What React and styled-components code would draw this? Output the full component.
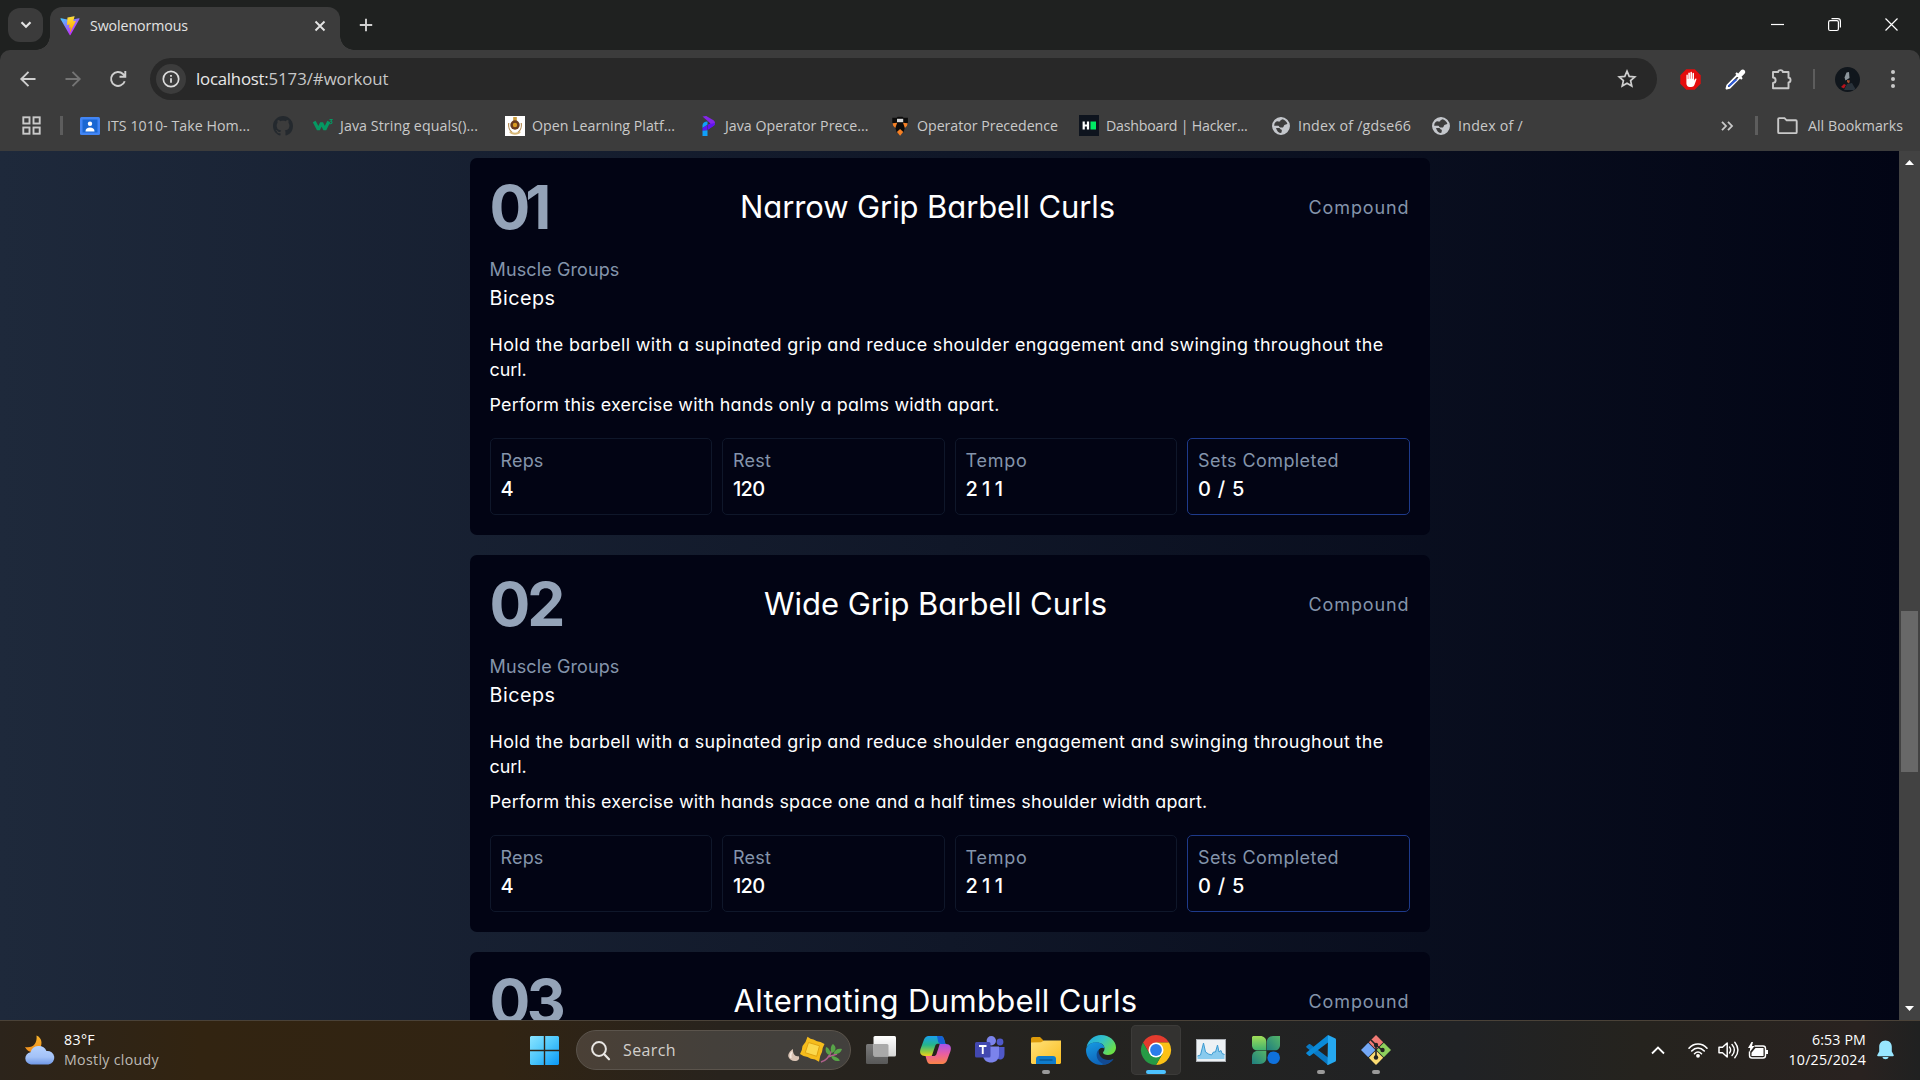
import React, { useLayoutEffect, useRef, useState } from "react";
import styled, { createGlobalStyle, css } from "styled-components";

const UI = '"Open Sans", "Noto Sans", sans-serif';
const BODY = 'Inter, "Open Sans", sans-serif';

const Global = createGlobalStyle`
  * { box-sizing: border-box; }
  html, body { margin: 0; padding: 0; background: #1f2120; overflow: hidden; }
  svg { display: block; flex: none; overflow: visible; }
  p, h2, h3 { margin: 0; font-weight: inherit; font-size: inherit; }
`;

/* Single-line label whose tracking is adjusted so it spans the given width */
const Label = styled.span`
  display: inline-block;
  white-space: pre;
`;
function Fit({ w, children }) {
  const ref = useRef(null);
  const [spacing, setSpacing] = useState(0);
  useLayoutEffect(() => {
    const natural = ref.current.getBoundingClientRect().width;
    setSpacing((w - natural) / children.length);
  }, [w, children]);
  return <Label ref={ref} style={{ letterSpacing: spacing }}>{children}</Label>;
}

const Screen = styled.div`
  width: 1920px;
  height: 1080px;
  display: flex;
  flex-direction: column;
  overflow: hidden;
  font-family: ${UI};
`;

/* ---------- browser chrome ---------- */
const TabStrip = styled.div`
  height: 50px;
  flex: none;
  display: flex;
  background: #1f2120;
  padding-left: 8px;
`;
const TabSearch = styled.div`
  width: 35px;
  height: 34px;
  margin: 8px 7px 0 0;
  border-radius: 12px;
  background: #3b3b3b;
  display: grid;
  place-items: center;
`;
const Tab = styled.div`
  position: relative;
  width: 290px;
  height: 43px;
  margin-top: 7px;
  padding: 0 14px 6px 10px;
  display: flex;
  align-items: center;
  background: #3c3c3c;
  border-radius: 12px 12px 0 0;
  color: #e3e3e3;
  font-size: 14.2px;
  &::before, &::after {
    content: "";
    position: absolute;
    bottom: 0;
    width: 14px;
    height: 14px;
  }
  &::before { left: -14px; background: radial-gradient(circle at 0 0, transparent 13.5px, #3c3c3c 14px); }
  &::after { right: -14px; background: radial-gradient(circle at 100% 0, transparent 13.5px, #3c3c3c 14px); }
`;
const TabTitle = styled.span`
  flex: 1;
  padding-left: 10px;
`;
const NewTab = styled.div`
  width: 51px;
  height: 50px;
  display: grid;
  place-items: center;
`;
const WindowControls = styled.div`
  margin-left: auto;
  display: grid;
  grid-template-columns: repeat(3, 57px);
  height: 49px;
  place-items: center;
`;

const Toolbar = styled.div`
  height: 58px;
  flex: none;
  display: flex;
  align-items: center;
  background: #3c3c3c;
  border-radius: 10px 10px 0 0;
`;
const NavButton = styled.div`
  width: 45px;
  height: 45px;
  display: grid;
  place-items: center;
  ${(p) => p.$first && css`margin-left: 5px;`}
`;
const AddressBar = styled.div`
  width: 1507px;
  height: 42px;
  margin-left: 10px;
  padding: 0 20px 0 6px;
  display: flex;
  align-items: center;
  border-radius: 21px;
  background: #282828;
  color: #c7c7c7;
  font-size: 16.8px;
`;
const SiteInfo = styled.div`
  width: 30px;
  height: 30px;
  border-radius: 50%;
  background: #3c3c3c;
  display: grid;
  place-items: center;
`;
const Url = styled.div`
  flex: 1;
  padding: 0 0 1px 10px;
  b { font-weight: 400; color: #e8e8e8; }
`;
const ExtCell = styled.div`
  width: ${(p) => p.$w}px;
  height: 42px;
  display: grid;
  place-items: center;
  ${(p) => p.$first && css`margin-left: 10px;`}
`;
const Divider = styled.i`
  width: ${(p) => p.$w || 2}px;
  height: 20px;
  background: #5d5d5d;
`;
const Avatar = styled.div`
  width: 25px;
  height: 25px;
  border-radius: 50%;
  overflow: hidden;
  background: #10161c;
`;

const BookmarkBar = styled.div`
  height: 43px;
  flex: none;
  padding: 0 17px 8px 22px;
  display: flex;
  align-items: center;
  background: #3c3c3c;
  color: #c9c9c9;
  font-size: 14.2px;
`;
const BarRule = styled.i`
  width: 3px;
  height: 19px;
  background: #5d5d5d;
  margin: ${(p) => p.$m};
`;
const Bookmark = styled.div`
  width: ${(p) => p.$w}px;
  display: flex;
  align-items: center;
  gap: 7px;
`;
const AllBookmarks = styled.div`
  display: flex;
  align-items: center;
  gap: 10px;
`;
const More = styled.div`margin-left: auto;`;

/* ---------- page ---------- */
const Viewport = styled.div`
  height: 869px;
  flex: none;
  display: flex;
  overflow: hidden;
`;
const Page = styled.main`
  flex: 1;
  padding-top: 7px;
  display: flex;
  flex-direction: column;
  align-items: center;
  gap: 20px;
  background: linear-gradient(to right, #1e293b, #020515);
  font-family: ${BODY};
  font-feature-settings: "cv11";
  color: #fff;
`;
const Card = styled.section`
  width: 960px;
  height: 377px;
  flex: none;
  padding: 20px;
  display: flex;
  flex-direction: column;
  gap: 20px;
  border-radius: 7px;
  background: #020414;
`;
const CardHeader = styled.div`
  display: flex;
  align-items: center;
  justify-content: space-between;
  height: 60px;
  padding-bottom: 2px;
`;
const Index = styled.h2`
  font-size: 60.5px;
  line-height: 58px;
  font-weight: 700;
  color: #94a3b8;
`;
const Title = styled.h2`
  font-size: 31px;
  line-height: 40px;
`;
const Muted = styled.p`
  font-size: 18px;
  line-height: 23px;
  padding-bottom: 2px;
  color: #8494ab;
`;
const Type = styled(Muted)`padding-bottom: 0;`;
const Muscle = styled.p`
  height: 30px;
  font-size: 19.8px;
  line-height: 31px;
`;
const Notes = styled.div`
  display: flex;
  flex-direction: column;
  gap: 10px;
  font-size: 17.9px;
  line-height: 23px;
`;
const Line = styled.div`height: 25px;`;
const Stats = styled.div`
  display: grid;
  grid-template-columns: repeat(4, 1fr);
  gap: 10px;
`;
const Stat = styled.div`
  height: 77px;
  padding: 10px;
  border: 1px solid ${(p) => (p.$active ? "#1e3a8a" : "#0f172a")};
  border-radius: 5px;
`;
const Value = styled.p`
  font-size: 20px;
  line-height: 30px;
  font-weight: 550;
`;

const Scrollbar = styled.div`
  width: 21px;
  background: #424242;
  display: flex;
  flex-direction: column;
  align-items: center;
  padding: 9px 0;
`;
const Thumb = styled.div`
  width: 17px;
  height: 161px;
  margin: 446px 0 auto;
  background: #686868;
`;

/* ---------- taskbar ---------- */
const Taskbar = styled.footer`
  height: 60px;
  flex: none;
  display: flex;
  align-items: center;
  padding-bottom: 1px;
  border-top: 1px solid #4a4238;
  background: linear-gradient(to right, #2c241b 0, #322411 200px, #312413 500px, #28231d 720px, #242320 1100px, #202225 1460px, #25231e 1640px, #292220 1860px, #202121 1920px);
  color: #fff;
`;
const Weather = styled.div`
  width: 517px;
  padding-left: 24px;
  display: flex;
  align-items: center;
  gap: 8px;
  font-size: 14.2px;
  line-height: 20px;
`;
const Sub = styled.div`color: #bdb9b4;`;
const TaskButton = styled.div`
  position: relative;
  width: 50px;
  height: 50px;
  margin: 0 2.5px;
  display: grid;
  place-items: center;
  border-radius: 5px;
  ${(p) => p.$active && css`background: #333230; box-shadow: inset 0 0 0 1px #3c3b39;`}
`;
const Running = styled.i`
  position: absolute;
  left: 50%;
  bottom: 1px;
  width: ${(p) => (p.$active ? 20 : 8)}px;
  height: 4px;
  transform: translateX(-50%);
  border-radius: 2px;
  background: ${(p) => (p.$active ? "#4cc2ff" : "#9a9a9a")};
`;
const SearchBox = styled.div`
  width: 275px;
  height: 40px;
  margin: 0 2px 0 4px;
  padding: 0 7px 0 14px;
  display: flex;
  align-items: center;
  gap: 13px;
  border: 1px solid #5b544c;
  border-radius: 20px;
  background: linear-gradient(to right, #4a4036, #44403b 50%, #42403d);
  color: #d2cfcc;
  font-size: 16px;
`;
const Doodle = styled.div`margin-left: auto;`;
const Tray = styled.div`
  margin-left: auto;
  display: flex;
  align-items: center;
`;
const TrayCell = styled.div`
  width: ${(p) => p.$w}px;
  display: grid;
  place-items: center;
  ${(p) => p.$end && css`padding-right: 15px;`}
`;
const Clock = styled.div`
  width: 93px;
  text-align: right;
  font-size: 14.2px;
  line-height: 20px;
`;

/* ---------- icons ---------- */
const S = ({ w = 20, h = w, vb, children, ...r }) => (
  <svg width={w} height={h} viewBox={vb || `0 0 ${w} ${h}`} fill="none" {...r}>{children}</svg>
);

const ViteIcon = () => (
  <S w={20} vb="0 0 410 404">
    <defs>
      <linearGradient id="vA" x1="6" y1="33" x2="235" y2="344" gradientUnits="userSpaceOnUse"><stop stopColor="#41D1FF" /><stop offset="1" stopColor="#BD34FE" /></linearGradient>
      <linearGradient id="vB" x1="194" y1="8" x2="236" y2="292" gradientUnits="userSpaceOnUse"><stop stopColor="#FFEA83" /><stop offset=".08" stopColor="#FFDD35" /><stop offset="1" stopColor="#FFA800" /></linearGradient>
    </defs>
    <path d="M399.6 59.5 215.6 388.500c-3.800 6.800-13.500 6.800-17.300.100L10.600 59.500c-4.200-7.300 2.100-16.200 10.400-14.700l184.200 32.900c1.200.2 2.400.2 3.500 0l180.400-32.900c8.300-1.500 14.600 7.300 10.500 14.700z" fill="url(#vA)" />
    <path d="M293 1.600 156.800 28.300c-2.200.4-3.900 2.300-4 4.600l-8.400 141.500c-.2 3.300 2.900 5.900 6.100 5.200l37.900-8.800c3.600-.8 6.800 2.300 6 5.900l-11.200 55.200c-.8 3.700 2.700 6.900 6.300 5.800l23.400-7.100c3.600-1.100 7.100 2.100 6.400 5.800l-17.900 86.700c-1.100 5.400 6.100 8.400 9.100 3.700l2-3.100 111-221.500c1.900-3.700-1.400-8-5.400-7.200l-39 7.500c-3.700.7-6.800-2.700-5.800-6.300l25.500-88.300c1-3.600-2.100-7-5.800-6.300z" fill="url(#vB)" />
  </S>
);
const InfoIcon = () => (
  <S w={18}><circle cx="9" cy="9" r="7.7" stroke="#dcdcdc" strokeWidth="1.700" /><path d="M9 8.200v4.600M9 5v1.800" stroke="#dcdcdc" strokeWidth="1.800" /></S>
);
const ArrowIcon = ({ right, color }) => (
  <S w={16} transform={right ? "scale(-1 1)" : undefined}><path d="M8.500.800 1.300 8l7.200 7.200M1.500 8H15.500" stroke={color} strokeWidth="1.900" /></S>
);
const ReloadIcon = () => (
  <S w={18}><path d="M15.700 11.200A7 7 0 1 1 14 4l2 2.200M16.300 1v5.700H10.500" stroke="#cfcfcf" strokeWidth="1.900" /></S>
);
const AdBlockIcon = () => (
  <S w={21}>
    <path d="M6.200.3h8.600l5.900 6v8.500l-6 5.900H6.300l-6-5.900V6.300z" fill="#e40d0d" />
    <path d="M6.400 12.500V6.200c0-1 1.400-1 1.400 0V10h.5V4.300c0-1.100 1.600-1.100 1.600 0V9.800h.5V3.500c0-1.100 1.600-1.100 1.600 0v6.300h.5V4.600c0-1 1.500-1 1.500 0v7.200l.9-1.700c.6-1 1.900-.6 1.500.5l-1.900 5.200c-.6 1.500-1.700 2.200-3.300 2.200h-1.500c-2 0-3.300-1.700-3.300-3.600z" fill="#fff" />
  </S>
);
const DropperIcon = () => (
  <S w={21}>
    <path d="M12.300 6.200 2.300 16.400 1.500 19.500l3.100-.7L14.700 8.700z" stroke="#fff" strokeWidth="1.900" strokeLinejoin="round" fill="#3c3c3c" />
    <path d="M9.500 10.600h3.200L4.400 18l-1.600-1.300z" fill="#2b59d8" />
    <path d="m10.300 4.700 1.400-1.500 1.500 1.200 3-3.300c2-2 5.400 1.100 3.500 3.400l-3.200 3.200 1.200 1.500-1.500 1.500z" fill="#fff" />
  </S>
);
const PuzzleIcon = () => (
  <S w={21} h={21}><path d="M2 3h5.200C7.200.500 11.800.500 11.800 3H17.500v5.700c2.700 0 2.700 4.800 0 4.800V19.200H2v-5.300c3.500-.2 3.500-5.200 0-5.400z" stroke="#c9c9c9" strokeWidth="1.900" strokeLinejoin="round" /></S>
);
const HeroAvatar = () => (
  <S w={25}><path d="M11.500 5.500 14 5l.5 6-4 2.500-1-3z" fill="#8c959c" /><path d="m12 13 3 .5-1 3-2-1.500z" fill="#a5502f" /><path d="m6 20 3-3 2 1-2 3.500z" fill="#b8131c" /><path d="m12 17 5-1 4 7H9z" fill="#2a333b" /></S>
);
const AppsIcon = () => (
  <S w={19}>{[[1, 1], [11.200, 1], [1, 11.200], [11.200, 11.200]].map(([x, y]) => <rect key={x + "-" + y} x={x + .3} y={y + .3} width="6.200" height="6.200" stroke="#c9c9c9" strokeWidth="1.900" />)}</S>
);
const ClassroomIcon = () => (
  <S w={20} h={18}><rect width="20" height="18" rx="1.500" fill="#4285f4" /><rect x="2.500" y="2.500" width="15" height="13" fill="#1967d2" /><circle cx="10" cy="6.700" r="2.200" fill="#fff" /><path d="M5.500 14.500c0-3 2-4 4.500-4s4.500 1 4.500 4z" fill="#fff" /></S>
);
const GithubIcon = () => (
  <S w={20} vb="0 0 16 16"><path fill="#24292e" d="M8 0C3.580 0 0 3.580 0 8c0 3.540 2.290 6.530 5.470 7.590.4.070.55-.17.55-.38 0-.19-.01-.82-.01-1.490-2.010.37-2.530-.49-2.690-.94-.09-.23-.48-.94-.82-1.130-.28-.15-.68-.52-.01-.53.63-.01 1.080.58 1.230.82.72 1.210 1.870.87 2.330.66.070-.52.280-.87.510-1.070-1.780-.2-3.640-.89-3.640-3.950 0-.87.310-1.590.820-2.150-.08-.2-.36-1.020.08-2.120 0 0 .67-.21 2.200.82.640-.18 1.320-.27 2-.27s1.360.09 2 .27c1.530-1.040 2.200-.82 2.200-.82.44 1.100.16 1.920.08 2.120.51.56.82 1.270.82 2.150 0 3.070-1.870 3.750-3.650 3.950.29.25.54.73.54 1.480 0 1.070-.01 1.930-.01 2.200 0 .21.15.46.55.38A8.010 8.010 0 0 0 16 8c0-4.420-3.580-8-8-8z" /></S>
);
const W3Icon = () => (
  <S w={20} h={16}>
    <path d="m1.200 3.500 4.200 8 3.200-6.500 3.200 6.500 4-8" stroke="#059862" strokeWidth="3.200" strokeLinejoin="bevel" />
    <path d="M16.500 1.500h2.500l-1.300 1.700c1.900.2 1.700 2.600-.2 2.600-.6 0-1-.2-1.300-.5" stroke="#059862" strokeWidth="1.100" />
  </S>
);
const CrestIcon = () => (
  <S w={20}><rect width="20" height="20" fill="#fff" /><rect x="8.200" y="1" width="3.600" height="4" fill="#c99a3c" /><circle cx="10" cy="9" r="4.700" fill="#6b3a1f" /><circle cx="10" cy="9" r="2.200" fill="#d99a20" /><path d="M3.800 7c-.6 3.500.6 7.500 3.200 9M16.200 7c.6 3.500-.6 7.500-3.200 9" stroke="#b28a50" strokeWidth="1.200" /><path d="M5 15.500c2 3 8 3 10 0" stroke="#d8b878" strokeWidth="2" /></S>
);
const ProgramizIcon = () => (
  <S w={20}>
    <path d="M4.500.6 8.200 0l7.300 4.300c1.700 1.100 1.900 3.300.9 4.700L10.200 13.200V9.300l2.300-1.800z" fill="#8426ea" />
    <path d="M10 8.500 17 7c.1 1.400-.5 2.300-1.500 3L10 13.700z" fill="#6013f0" />
    <path d="M4.500 9.500c0-2.500 2-4 5-4v3.300L4.500 12z" fill="#10a0f8" />
    <path d="m4.500 12 5-3.200v5.400L4.500 15z" fill="#5a18f4" />
    <path d="m4.500 14.800 5-.6V20h-5z" fill="#10a0f8" />
  </S>
);
const ShieldIcon = () => (
  <S w={20}>
    <path d="M2.300 1.800h4.400l1-1h4.800l1 1h4.400v4.900l-2.700 3.600-1.700 6-3.400 2-3.500-2-1.600-6-2.700-3.600z" fill="#0c0c0c" />
    <rect x="7" y="2.800" width="6.200" height="3.400" fill="#d8d8d8" />
    <path d="m2.600 7.200 4.600-.4L5.300 12 3.200 9.800zM17.600 7.200l-4.600-.4 1.900 5.200 2.100-2.200z" fill="#f58025" />
    <path d="m10.100 13 3.200 3-3.200 3.700L6.900 16z" fill="#f58025" />
  </S>
);
const HackerIcon = () => (
  <S w={20} h={21}><rect width="20" height="21" fill="#0e141e" /><path d="M4.700 6.500v8M9 6.500v8M4.700 10.500H9" stroke="#fff" strokeWidth="2.200" /><rect x="11.500" y="6.500" width="5.500" height="8" fill="#00ea64" /></S>
);
const GlobeIcon = () => (
  <S w={20}><circle cx="10" cy="10" r="8.200" fill="#c4c7cc" stroke="#c4c7cc" strokeWidth="1.500" /><path d="M11.500 3.200c2 .6 3.900 2 4.900 4.300-.9 1.300-2.300 1-3.200 1.800-.9.900-.2 1.800-1.400 2.200H9.500c-1.400 0-1.100-1.800-2.400-1.800H3.200C3 6.700 5.500 5 7 5.400c1.500.5 2.500-.1 2.500-1.100zM5 12h3.300c.9 0 .8 1.500 1.700 1.600 1.200.2 1 1.600.2 3.400-2.600 0-4.400-2-5.200-5z" fill="#3c3c3c" /></S>
);
const FolderIcon = () => (
  <S w={21} h={17}><path d="M1.200 15.200V2c0-.6.300-.9.900-.9h5.400l2.200 2.200h9.100c.6 0 .9.3.9.9v11c0 .6-.3.900-.9.900H2.100c-.6 0-.9-.3-.9-.9z" stroke="#c9c9c9" strokeWidth="1.900" /></S>
);

const WeatherIcon = () => (
  <S w={32} h={30}>
    <defs>
      <linearGradient id="moon" x1="0" y1="0" x2="0" y2="1"><stop stopColor="#f9b52c" /><stop offset="1" stopColor="#ef8d1d" /></linearGradient>
      <linearGradient id="cl" x1="0" y1="0" x2="0" y2="1"><stop stopColor="#b6d2ff" /><stop offset=".6" stopColor="#a3c2f7" /><stop offset="1" stopColor="#6f97e6" /></linearGradient>
    </defs>
    <path d="M12.500.5c6 2 7 11 1 15-5 3.400-10.500 1-12.500-3.500 8 1.500 12.500-3.500 11.500-11.500z" fill="url(#moon)" />
    <path d="M7 29.500a6.200 6.200 0 0 1-.5-12.300A8.500 8.500 0 0 1 22.500 16a6.800 6.800 0 0 1 2 13.500z" fill="url(#cl)" />
  </S>
);
const StartIcon = () => (
  <S w={29}>
    <defs><linearGradient id="st" x1="0" y1="0" x2="29" y2="29" gradientUnits="userSpaceOnUse"><stop stopColor="#8ae4ff" /><stop offset=".5" stopColor="#4cc6fb" /><stop offset="1" stopColor="#0a98f6" /></linearGradient></defs>
    <path d="M1 0h12.800v13.800H0V1zM15.200 0H28l1 1v12.800H15.200zM0 15.200h13.800V29H1l-1-1zM15.200 15.200H29V28l-1 1H15.200z" fill="url(#st)" />
  </S>
);
const SearchIcon = () => (
  <S w={19}><circle cx="8" cy="8" r="6.900" stroke="#e8e6e3" strokeWidth="2" /><path d="m13 13 5 5.300" stroke="#e8e6e3" strokeWidth="2.200" strokeLinecap="round" /></S>
);
const DoodleIcon = () => (
  <S w={56} h={28}>
    <path d="M6 13c-3 2-5.500 5-4.500 8s5 5 9 3.500c2-1 2-3 1-4.500-3 1-6-2-5.500-7z" fill="#d9c3b4" /><path d="M5 16c-1.500 2-2 4-1 6" stroke="#f5e8de" strokeWidth="1.500" />
    <path d="m20.500.8 3 2 3 .8 3.500 1.700 3.500.7 4 2-1.800 4-.7 4-1.700 3.700-1.300 6-4-2.300-4-.6-3.500-1.800-4-1-3.500-2 1.800-4 .7-4L18.500 6z" fill="#f6bc1c" />
    <path d="m21.500 6.500 11 3.300-2.800 10.500-11.500-3.600z" fill="#fbd84c" stroke="#dfa312" strokeWidth="1" />
    <path d="M34 26c4-1 8-4 11-12M41 21l9-3" stroke="#b0608c" strokeWidth="1.600" />
    <path d="M46 8c4 3 3 7-1 9-2-3-1.500-7 1-9zM39 11c3 1 5 4 4 8-4-1-5-4-4-8zM55 13c-1 4-4 5.500-8.500 5 1-4 4-6 8.500-5zM44 20c4 0 7 1.500 9 4.500-4 1.500-7.500 0-9-4.500z" fill="#58a548" />
  </S>
);
const TaskViewIcon = () => (
  <S w={30} h={28}>
    <defs><linearGradient id="tv" x1="0" y1="0" x2="0" y2="1"><stop stopColor="#fff" /><stop offset="1" stopColor="#d6d6d6" /></linearGradient><linearGradient id="tw" x1="0" y1="0" x2="0" y2="1"><stop stopColor="#7a7a7a" /><stop offset="1" stopColor="#585858" /></linearGradient></defs>
    <rect y="8" width="22" height="20" rx="1.500" fill="url(#tw)" /><rect x="7.500" y="0" width="22.500" height="20.500" rx="1.500" fill="url(#tv)" /><path d="M7.500 8H21a1.500 1.500 0 0 1 1.500 1.500v11H9a1.500 1.500 0 0 1-1.500-1.500z" fill="#a9a9a9" />
  </S>
);
const CopilotIcon = () => (
  <S w={31} h={28}>
    <defs>
      <linearGradient id="cA" x1="0" y1="0" x2="0" y2="1"><stop stopColor="#1aa0ee" /><stop offset=".45" stopColor="#25b58c" /><stop offset=".8" stopColor="#9ccc3a" /><stop offset="1" stopColor="#f3cf1f" /></linearGradient>
      <linearGradient id="cB" x1="0" y1="0" x2="0" y2="1"><stop stopColor="#a653ec" /><stop offset=".5" stopColor="#ea5ea0" /><stop offset="1" stopColor="#fb8447" /></linearGradient>
    </defs>
    <path d="M8.500 0h12c2.500 0 3.300 2 4 4.500l1 3.500h-4c-2 0-3.300 1-4 3L14.500 20H5c-4 0-5.800-3-4.500-7L4 3.500C5 1.200 6.500 0 8.500 0z" fill="url(#cA)" />
    <path d="M17 0h3.500c2.500 0 3.300 2 4 4.500l1 3.500h-4c-2 0-3.300-1-3.500-3z" fill="#1560d4" />
    <path d="M22.500 28h-12c-2.500 0-3.300-2-4-4.500L5.500 20h4c2 0 3.300-1 4-3l3-9H26c4 0 5.800 3 4.500 7L27 24.500c-1 2.300-2.500 3.500-4.500 3.500z" fill="url(#cB)" />
    <path d="M15.500 9c.6-1 1.500-1.300 3-1.300h1.300L16.500 18c-.6 1.500-1.500 2-3 2h-1.700z" fill="#28231d" />
  </S>
);
const TeamsIcon = () => (
  <S w={31} h={28}>
    <circle cx="25" cy="6" r="3.400" fill="#5059c9" /><circle cx="16.300" cy="4.800" r="4.700" fill="#7b83eb" />
    <path d="M21 11h8.500v7c0 7-7 6.500-8.500 3z" fill="#4f58c8" /><path d="M8 10.500h16V19c0 10-16 10-16 0z" fill="#7b83eb" />
    <rect y="6" width="15.500" height="15.500" rx="1.500" fill="#4248b0" /><path d="M4 10h7.500M7.750 10v8" stroke="#fff" strokeWidth="1.900" />
  </S>
);
const ExplorerIcon = () => (
  <S w={30} h={27}>
    <defs><linearGradient id="fo" x1="0" y1="0" x2="1" y2="1"><stop stopColor="#ffe17a" /><stop offset="1" stopColor="#fbbd1f" /></linearGradient></defs>
    <path d="M0 2C0 .7.7 0 2 0h7l4 4H30v8H0z" fill="#dc9a0a" /><path d="M0 5.500 10 5.200 13 3.500H30V26l-1 1H1l-1-1z" fill="url(#fo)" />
    <path d="M5 27v-5c0-1.800 1-3 3-3h14c2 0 3 1.200 3 3v5z" fill="#0f7ccb" /><path d="M8.500 23h13" stroke="#07528f" strokeWidth="1.300" />
  </S>
);
const EdgeIcon = () => (
  <S w={30}>
    <defs>
      <linearGradient id="eA" x1="0" y1="0" x2="1" y2=".6"><stop stopColor="#1ba5e4" /><stop offset=".5" stopColor="#33c1c8" /><stop offset="1" stopColor="#6be047" /></linearGradient>
      <linearGradient id="eB" x1="0" y1="0" x2=".5" y2="1"><stop stopColor="#169be3" /><stop offset="1" stopColor="#0e62b8" /></linearGradient>
    </defs>
    <path d="M.5 12C2 5 8 0 15 0c8.500 0 15 6 15 12.500 0 4.500-3.500 7.500-8 7.500-3 0-5-1-5-2.200 0-1 1.500-1.600 1.500-4.300C18.500 9 14 7.500 10 7.500S2.500 9 .5 12z" fill="url(#eA)" />
    <path d="M.1 14C1.500 9.500 5.500 7.300 10 7.300c4.500 0 8.500 2.500 8.500 6.200-7-3.500-9.500 8-1.500 12 3 1.500 7 1 10.500-1.500C22.500 31 12 31.500 6 27 1.500 23.500-.3 18.500.1 14z" fill="url(#eB)" />
    <path d="M12.500 14.500c-4 5-1.500 13 6.500 15.200 3.500-.8 6.500-3 8.500-6-7 3.700-15.500-.7-15-9.200z" fill="#124a92" />
  </S>
);
const ChromeIcon = () => (
  <S w={30} vb="-15 -15 30 30">
    <path d="M-13 -7.500A15 15 0 0 1 13 -7.500H0L-6.500 3.750z" fill="#e33b2e" />
    <path d="M13 -7.500A15 15 0 0 1 0 15L6.500 3.750 0-7.500z" fill="#fbc116" />
    <path d="M0 15A15 15 0 0 1-13-7.500L-6.500 3.750 6.500 3.750z" fill="#269a45" />
    <circle r="7.500" fill="#fff" /><circle r="5.900" fill="#2b7de9" />
  </S>
);
const MonitorIcon = () => (
  <S w={30} h={23}><rect x=".5" y=".5" width="29" height="22" fill="#edf1f4" stroke="#a9adb2" /><path d="M1.500 20v-3l3-1 3-12 2 9 3 2 3 1 2-3h2l2-7 1.500 7 2-1.500 1 3 2.500 1V20z" fill="#8acbee" /><path d="m1.500 17 3-1 3-12 2 9 3 2 3 1 2-3h2l2-7 1.500 7 2-1.500 1 3 2.500 1" stroke="#3c9bd2" strokeWidth="1" /></S>
);
const LeafIcon = () => (
  <S w={28}>
    <defs><linearGradient id="lf" x1="0" y1="0" x2="0" y2="1"><stop stopColor="#a0dc58" /><stop offset="1" stopColor="#3fb26e" /></linearGradient><linearGradient id="lg" x1="1" y1="0" x2="0" y2="1"><stop stopColor="#55b567" /><stop offset="1" stopColor="#1f7e80" /></linearGradient></defs>
    <path d="M1 0h7c4 0 6.300 2.500 6.300 6v8.300H5c-3 0-5-2-5-5V1z" fill="url(#lf)" /><path d="M28 0v9c0 3-2 5.300-5 5.300h-8.200V6c0-3.500 2.700-6 6.200-6z" fill="url(#lg)" /><path d="M0 28v-7c0-4 2.500-6.200 6-6.200h8.300v7c0 4-2.700 6.200-6.300 6.200z" fill="url(#lg)" /><circle cx="21.700" cy="21.700" r="6.300" fill="#0f71dd" />
  </S>
);
const CodeIcon = () => (
  <S w={30}><path d="M.4 11.300 2.800 9.200c.5-.4 1-.4 1.500 0L22 22.500V30L.5 12.500c-.4-.4-.4-.8-.1-1.200z" fill="#0a79c4" /><path d="M.4 18.700l2.400 2.100c.5.4 1 .4 1.500 0L22 7.500V0L.5 17.500c-.4.400-.4.800-.1 1.200z" fill="#0a8ad8" /><path d="M22 0l7 3.200c.7.300 1 .8 1 1.500v20.600c0 .7-.3 1.200-1 1.500L22 30c-.8 0-.9-.6-.5-1z" fill="#25a8f0" /></S>
);
const GitIcon = () => (
  <S w={30} vb="-15 -15 30 30">
    <path d="M0-15 7.200-7.800 0-.6-7.200-7.800z" fill="#f17a75" /><path d="M7.800-7.200 15 0 7.800 7.200.6 0z" fill="#8ed05c" /><path d="M0 .6 7.200 7.800 0 15-7.200 7.800z" fill="#fbdb72" /><path d="M-7.800-7.200-.6 0-7.800 7.200-15 0z" fill="#74a8f6" />
    <path d="M-5-10 0-5V8M0-5l6 5" stroke="#222" strokeWidth="1.600" /><circle cy="-5" r="2.200" fill="#222" /><circle cx="6.500" cy="0" r="2.200" fill="#222" /><circle cy="7.500" r="2.200" fill="#222" />
  </S>
);
const WifiIcon = () => (
  <S w={20} h={16}><path d="M1 6.200c5-5.600 13-5.600 18 0M3.700 9c3.700-4 8.900-4 12.600 0M6.500 11.700c2.200-2.300 4.800-2.300 7 0" stroke="#fff" strokeWidth="1.600" strokeLinecap="round" /><circle cx="10" cy="13.800" r="1.900" fill="#fff" /></S>
);
const VolumeIcon = () => (
  <S w={21} h={18}><path d="M1 6.200h3.500L9.200 2v14l-4.700-4.200H1z" stroke="#fff" strokeWidth="1.500" strokeLinejoin="round" /><path d="M11.500 6c1.500 2 1.500 4 0 6M14 3.500c3 3.500 3 7.500 0 11M16.800 1.200c4 5 4 10.600 0 15.600" stroke="#fff" strokeWidth="1.400" strokeLinecap="round" /></S>
);
const BatteryIcon = () => (
  <S w={21} h={17}><path d="M6.500 4H15c1.700 0 2.500.8 2.500 2.500v7c0 1.700-.8 2.500-2.500 2.500H4c-1.700 0-2.500-.8-2.500-2.500V9.500" stroke="#fff" strokeWidth="1.400" /><path d="M7.500 6H15.500v8H3.500v-3.200L6 7.800z" fill="#fff" /><path d="M18 8h2v4h-2z" fill="#fff" /><path d="M3.500 0 0 6h2.200L1.500 10.500 6.500 4H4L5 0z" fill="#fff" /></S>
);
const BellIcon = () => (
  <S w={17} h={20}><path d="M8.500.4c3.800 0 6.300 2.800 6.300 6.300v4.800l1.900 3.600c.3.700 0 1.200-.7 1.200H1c-.7 0-1-.5-.7-1.200l1.900-3.600V6.700C2.200 3.200 4.700.4 8.500.4z" fill="#98e6ff" /><path d="M5.500 17h6c-.3 3-5.700 3-6 0z" fill="#98e6ff" /></S>
);

/* ---------- data ---------- */
const bookmarks = [
  { w: 193, icon: <ClassroomIcon />, text: "ITS 1010- Take Hom...", tw: 143 },
  { w: 40, icon: <GithubIcon /> },
  { w: 192, icon: <W3Icon />, text: "Java String equals()...", tw: 138 },
  { w: 193, icon: <CrestIcon />, text: "Open Learning Platf...", tw: 143 },
  { w: 192, icon: <ProgramizIcon />, text: "Java Operator Prece...", tw: 143.5 },
  { w: 189, icon: <ShieldIcon />, text: "Operator Precedence", tw: 141 },
  { w: 192, icon: <HackerIcon />, text: "Dashboard | Hacker...", tw: 141.5 },
  { w: 160, icon: <GlobeIcon />, text: "Index of /gdse66", tw: 113 },
  { w: 110, icon: <GlobeIcon />, text: "Index of /", tw: 65 },
];

const exercises = [
  { n: "01", nw: 57, title: "Narrow Grip Barbell Curls", tw: 375, tip: "Perform this exercise with hands only a palms width apart.", pw: 510 },
  { n: "02", nw: 73, title: "Wide Grip Barbell Curls", tw: 343, tip: "Perform this exercise with hands space one and a half times shoulder width apart.", pw: 718 },
  { n: "03", nw: 73, title: "Alternating Dumbbell Curls", tw: 404 },
];
const stats = [
  { label: "Reps", lw: 43, value: "4", vw: 14 },
  { label: "Rest", lw: 38, value: "120", vw: 31.5 },
  { label: "Tempo", lw: 62, value: "2 1 1", vw: 37 },
  { label: "Sets Completed", lw: 141, value: "0 / 5", vw: 47, active: true },
];
const apps = [
  { icon: <TaskViewIcon /> },
  { icon: <CopilotIcon /> },
  { icon: <TeamsIcon /> },
  { icon: <ExplorerIcon />, running: true },
  { icon: <EdgeIcon /> },
  { icon: <ChromeIcon />, running: true, active: true },
  { icon: <MonitorIcon /> },
  { icon: <LeafIcon /> },
  { icon: <CodeIcon />, running: true },
  { icon: <GitIcon />, running: true },
];

function Exercise({ n, nw, title, tw, tip, pw }) {
  return (
    <Card>
      <CardHeader>
        <Index><Fit w={nw}>{n}</Fit></Index>
        <Title><Fit w={tw}>{title}</Fit></Title>
        <Type><Fit w={101}>Compound</Fit></Type>
      </CardHeader>
      {tip && (
        <>
          <div>
            <Muted><Fit w={130}>Muscle Groups</Fit></Muted>
            <Muscle><Fit w={66}>Biceps</Fit></Muscle>
          </div>
          <Notes>
            <div>
              <Line><Fit w={894}>Hold the barbell with a supinated grip and reduce shoulder engagement and swinging throughout the</Fit></Line>
              <Line><Fit w={37}>curl.</Fit></Line>
            </div>
            <Line><Fit w={pw}>{tip}</Fit></Line>
          </Notes>
          <Stats>
            {stats.map((s) => (
              <Stat key={s.label} $active={s.active}>
                <Muted><Fit w={s.lw}>{s.label}</Fit></Muted>
                <Value><Fit w={s.vw}>{s.value}</Fit></Value>
              </Stat>
            ))}
          </Stats>
        </>
      )}
    </Card>
  );
}

export default function App() {
  return (
    <Screen>
      <Global />
      <TabStrip>
        <TabSearch><S w={12} h={8}><path d="m1.500 1.300 4.500 4.400 4.500-4.400" stroke="#e3e3e3" strokeWidth="2.200" /></S></TabSearch>
        <Tab>
          <ViteIcon />
          <TabTitle><Fit w={98}>Swolenormous</Fit></TabTitle>
          <S w={12}><path d="m1.500 1.500 9 9m0-9-9 9" stroke="#e3e3e3" strokeWidth="1.900" /></S>
        </Tab>
        <NewTab><S w={14}><path d="M7 .8v12.400M.8 7h12.400" stroke="#d0d0d0" strokeWidth="1.900" /></S></NewTab>
        <WindowControls>
          <S w={13}><path d="M0 6.500h13" stroke="#fff" strokeWidth="1.200" /></S>
          <S w={13}><rect x=".6" y="2.700" width="9.800" height="9.800" rx="1.500" stroke="#fff" strokeWidth="1.200" /><path d="M3.500.6h6.300c1.600 0 2.600 1 2.600 2.600v6.300" stroke="#fff" strokeWidth="1.200" /></S>
          <S w={13}><path d="m.5.5 12 12m0-12-12 12" stroke="#fff" strokeWidth="1.200" /></S>
        </WindowControls>
      </TabStrip>
      <Toolbar>
        <NavButton $first><ArrowIcon color="#cfcfcf" /></NavButton>
        <NavButton><ArrowIcon right color="#747474" /></NavButton>
        <NavButton><ReloadIcon /></NavButton>
        <AddressBar>
          <SiteInfo><InfoIcon /></SiteInfo>
          <Url><b><Fit w={72.500}>localhost:</Fit></b><Fit w={120}>5173/#workout</Fit></Url>
          <S w={20}><path d="m10 2.200 2.200 5.200 5.600.500-4.200 3.700 1.200 5.500L10 14.200l-4.800 2.900 1.200-5.500L2.200 7.900l5.600-.5z" stroke="#cfcfcf" strokeWidth="1.700" /></S>
        </AddressBar>
        <ExtCell $w={46} $first><AdBlockIcon /></ExtCell>
        <ExtCell $w={45}><DropperIcon /></ExtCell>
        <ExtCell $w={46}><PuzzleIcon /></ExtCell>
        <ExtCell $w={20}><Divider /></ExtCell>
        <ExtCell $w={47}><Avatar><HeroAvatar /></Avatar></ExtCell>
        <ExtCell $w={43}><S w={4} h={18}><circle cx="2" cy="2" r="2" fill="#c9c9c9" /><circle cx="2" cy="9" r="2" fill="#c9c9c9" /><circle cx="2" cy="16" r="2" fill="#c9c9c9" /></S></ExtCell>
      </Toolbar>
      <BookmarkBar>
        <AppsIcon />
        <BarRule $m="0 17px 0 19px" />
        {bookmarks.map((b, i) => (
          <Bookmark key={i} $w={b.w}>{b.icon}{b.text && <Fit w={b.tw}>{b.text}</Fit>}</Bookmark>
        ))}
        <More><S w={12} h={10}><path d="m1 .8 4 4.200-4 4.200M7 .8 11 5 7 9.200" stroke="#c9c9c9" strokeWidth="1.800" /></S></More>
        <BarRule $m="0 19px 0 22px" />
        <AllBookmarks><FolderIcon /><Fit w={95}>All Bookmarks</Fit></AllBookmarks>
      </BookmarkBar>

      <Viewport>
        <Page>{exercises.map((e) => <Exercise key={e.n} {...e} />)}</Page>
        <Scrollbar>
          <S w={9} h={5}><path d="M0 5 4.500 0 9 5z" fill="#fff" /></S>
          <Thumb />
          <S w={9} h={5}><path d="M0 0h9L4.500 5z" fill="#fff" /></S>
        </Scrollbar>
      </Viewport>

      <Taskbar>
        <Weather>
          <WeatherIcon />
          <div>
            <div><Fit w={31}>83°F</Fit></div>
            <Sub><Fit w={95}>Mostly cloudy</Fit></Sub>
          </div>
        </Weather>
        <TaskButton><StartIcon /></TaskButton>
        <SearchBox><SearchIcon /><Fit w={53}>Search</Fit><Doodle><DoodleIcon /></Doodle></SearchBox>
        {apps.map((a, i) => (
          <TaskButton key={i} $active={a.active}>{a.icon}{a.running && <Running $active={a.active} />}</TaskButton>
        ))}
        <Tray>
          <TrayCell $w={50}><S w={14} h={9}><path d="m1 7.500 6-6 6 6" stroke="#fff" strokeWidth="1.800" /></S></TrayCell>
          <TrayCell $w={30}><WifiIcon /></TrayCell>
          <TrayCell $w={30}><VolumeIcon /></TrayCell>
          <TrayCell $w={30}><BatteryIcon /></TrayCell>
          <Clock>
            <div><Fit w={54}>6:53 PM</Fit></div>
            <div><Fit w={77.500}>10/25/2024</Fit></div>
          </Clock>
          <TrayCell $w={54} $end><BellIcon /></TrayCell>
        </Tray>
      </Taskbar>
    </Screen>
  );
}
